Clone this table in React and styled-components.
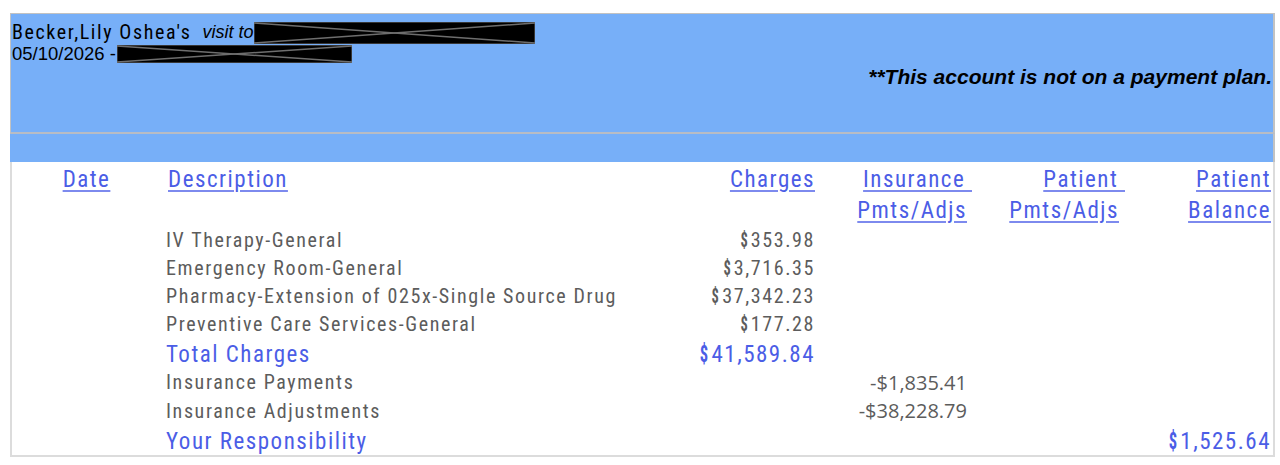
import React from 'react';
import styled, { createGlobalStyle } from 'styled-components';

const Global = createGlobalStyle`
  html, body { margin: 0; padding: 0; background: #ffffff; }
  body { font-family: "Liberation Sans", Arial, sans-serif; }
`;

const COND = `"Liberation Sans Narrow", "Arial Narrow", "Roboto Condensed", "DejaVu Sans Condensed", "Liberation Sans", sans-serif`;

const Page = styled.div`
  padding: 13px 0 0 10px;
  width: 1265px;
`;

const Header = styled.section`
  background: #77aff8;
  border: 1px solid #c2c2c2;
  border-right-width: 2px;
  border-bottom: 2px solid #b8bcc4;
  padding: 7px 0 0 1px;
  box-sizing: border-box;
  height: 121px;
  display: flex;
  flex-direction: column;
`;

const NameLine = styled.div`
  display: flex;
  align-items: center;
  height: 23px;
  color: #000;
`;

const Name = styled.span`
  font-family: ${COND};
  font-size: 20px;
  letter-spacing: 1.6px;
  line-height: 23px;
`;

const VisitTo = styled.span`
  font-family: "Liberation Sans", Arial, sans-serif;
  font-style: italic;
  font-size: 18px;
  margin-left: 11px;
  line-height: 23px;
`;

const DateLine = styled.div`
  display: flex;
  align-items: center;
  gap: 1px;
  height: 20px;
  font-size: 18.5px;
  color: #000;
`;

const Notice = styled.div`
  margin-top: 1px;
  align-self: flex-end;
  padding-right: 1px;
  font-family: "Liberation Sans", Arial, sans-serif;
  font-weight: bold;
  font-style: italic;
  font-size: 21px;
  line-height: 24px;
  color: #000;
`;

const Band = styled.div`
  background: #77aff8;
  height: 28px;
  border-right: 2px solid #c2c2c2;
`;

const Table = styled.div`
  border: 2px solid #dcdcdc;
  border-top: none;
  padding: 3px 2px 0 0;
  display: flex;
  flex-direction: column;
`;

const Row = styled.div`
  display: grid;
  grid-template-columns: 149px 459px 195px 157px 153px 146px;
  box-sizing: border-box;
  height: ${p => p.$h}px;
  padding-top: ${p => p.$shift || 0}px;
  line-height: ${p => p.$h - (p.$shift || 0)}px;
  font-family: ${COND};
  font-size: ${p => (p.$big ? 23 : 20)}px;
  letter-spacing: ${p => (p.$big ? 1.5 : 1.6)}px;
  color: ${p => (p.$blue ? '#4b5de6' : '#5c5c5c')};
  white-space: nowrap;
`;

const Cell = styled.div`
  text-align: ${p => p.$align || 'left'};
  padding-left: ${p => p.$pl || 0}px;
  padding-right: ${p => p.$pr || 0}px;
`;

const HeadLink = styled.span`
  color: #4b5de6;
  text-decoration: underline;
  text-decoration-color: #7d8aee;
  text-decoration-thickness: 2px;
  text-underline-offset: 3px;
`;

const Dollar = styled.span`
  display: inline-block;
  font-weight: bold;
  letter-spacing: 0;
  transform: scaleX(0.72);
  transform-origin: center;
  margin-right: 2px;
`;

const Plain = styled.span`
  font-family: "Open Sans", "Noto Sans", sans-serif;
  letter-spacing: 0;
  font-size: 20px;
`;

const Redact = ({ w, h }) => (
  <svg width={w} height={h} viewBox={`0 0 ${w} ${h}`} style={{ display: 'block' }}>
    <rect x="0" y="0" width={w} height={h} fill="#000" stroke="#6e6e6e" strokeWidth="1" />
    <line x1="0" y1="1" x2={w} y2={h - 1} stroke="#6e6e6e" strokeWidth="1.5" />
    <line x1="0" y1={h - 1} x2={w} y2="1" stroke="#6e6e6e" strokeWidth="1.5" />
  </svg>
);

const Money = ({ v }) => (
  <>
    <Dollar>$</Dollar>
    {v}
  </>
);

const items = [
  ['IV Therapy-General', '353.98'],
  ['Emergency Room-General', '3,716.35'],
  ['Pharmacy-Extension of 025x-Single Source Drug', '37,342.23'],
  ['Preventive Care Services-General', '177.28'],
];

export default function App() {
  return (
    <>
      <Global />
      <Page>
        <Header>
          <NameLine>
            <Name>Becker,Lily Oshea's</Name>
            <VisitTo>visit to</VisitTo>
            <Redact w={281} h={22} />
          </NameLine>
          <DateLine>
            <span>05/10/2026 -</span>
            <Redact w={235} h={18} />
          </DateLine>
          <Notice>**This account is not on a payment plan.</Notice>
        </Header>
        <Band />
        <Table>
          <Row $h={30} $big>
            <Cell $align="center"><HeadLink>Date</HeadLink></Cell>
            <Cell $pl={7}><HeadLink>Description</HeadLink></Cell>
            <Cell $align="right"><HeadLink>Charges</HeadLink></Cell>
            <Cell $align="right"><HeadLink>Insurance&nbsp;</HeadLink></Cell>
            <Cell $align="right"><HeadLink>Patient&nbsp;</HeadLink></Cell>
            <Cell $align="right"><HeadLink>Patient</HeadLink></Cell>
          </Row>
          <Row $h={31} $big>
            <Cell />
            <Cell />
            <Cell />
            <Cell $align="right" $pr={5}><HeadLink>Pmts/Adjs</HeadLink></Cell>
            <Cell $align="right" $pr={6}><HeadLink>Pmts/Adjs</HeadLink></Cell>
            <Cell $align="right"><HeadLink>Balance</HeadLink></Cell>
          </Row>
          {items.map(([d, v]) => (
            <Row $h={28} key={d}>
              <Cell />
              <Cell $pl={5}>{d}</Cell>
              <Cell $align="right"><Money v={v} /></Cell>
              <Cell />
              <Cell />
              <Cell />
            </Row>
          ))}
          <Row $h={30} $big $blue $shift={3}>
            <Cell />
            <Cell $pl={5}>Total Charges</Cell>
            <Cell $align="right"><Money v="41,589.84" /></Cell>
            <Cell />
            <Cell />
            <Cell />
          </Row>
          <Row $h={29}>
            <Cell />
            <Cell $pl={5}>Insurance Payments</Cell>
            <Cell />
            <Cell $align="right" $pr={5}><Plain>-$1,835.41</Plain></Cell>
            <Cell />
            <Cell />
          </Row>
          <Row $h={28}>
            <Cell />
            <Cell $pl={5}>Insurance Adjustments</Cell>
            <Cell />
            <Cell $align="right" $pr={5}><Plain>-$38,228.79</Plain></Cell>
            <Cell />
            <Cell />
          </Row>
          <Row $h={30} $big $blue $shift={3}>
            <Cell />
            <Cell $pl={5}>Your Responsibility</Cell>
            <Cell />
            <Cell />
            <Cell />
            <Cell $align="right"><Money v="1,525.64" /></Cell>
          </Row>
        </Table>
      </Page>
    </>
  );
}
